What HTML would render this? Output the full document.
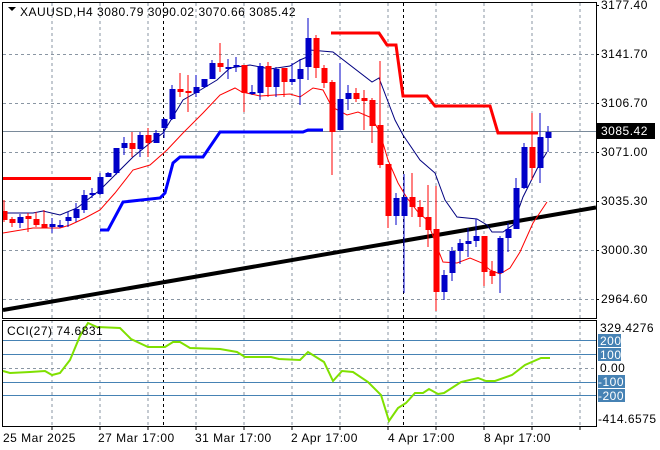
<!DOCTYPE html>
<html><head><meta charset="utf-8"><style>
body{margin:0;width:660px;height:450px;background:#fff;overflow:hidden}
svg{display:block}
text{font-family:"Liberation Sans",sans-serif;font-size:12px;letter-spacing:0.5px;fill:#000}
</style></head><body>
<svg width="660" height="450" xmlns="http://www.w3.org/2000/svg">
<defs><clipPath id="m"><rect x="3" y="3" width="593" height="315"/></clipPath></defs>
<rect width="660" height="450" fill="#fff"/>
<g stroke="#8a96a3" stroke-dasharray="3,3" stroke-width="1">
<path d="M52 3V318M100 3V318M148 3V318M196 3V318M244 3V318M292 3V318M340 3V318M388 3V318M436 3V318M484 3V318M532 3V318M580 3V318"/>
<path d="M3 54.5H596M3 103.5H596M3 152.5H596M3 201.5H596M3 250.5H596M3 299.5H596"/>
<path d="M52 320V426M100 320V426M148 320V426M196 320V426M244 320V426M292 320V426M340 320V426M388 320V426M436 320V426M484 320V426M532 320V426M580 320V426"/>
<path d="M3 368.5H596"/>
</g>
<g stroke="#000" stroke-dasharray="3,3"><path d="M163.5 3V318M403.5 3V318M163.5 320V426M403.5 320V426"/></g>
<path d="M3 131.5H596" stroke="#7a8a9a"/>
<g stroke="#4682b4"><path d="M3 340.5H596M3 354.5H596M3 382.5H596M3 395.5H596"/></g>
<g clip-path="url(#m)">
<path d="M3 310L596 207.5" stroke="#000" stroke-width="4"/>
<polyline fill="none" stroke="#f00" stroke-width="3" points="3,178.5 91,178.5"/>
<polyline fill="none" stroke="#f00" stroke-width="3" points="331,33 379,33 387,45 396,45 403,96 427,96 435,106 490,106 498,133 538,133"/>
<polyline fill="none" stroke="#0000ff" stroke-width="3" points="100,230 108,230 123,202 160,198 165,193 173,163 180,157 203,157 220,132 303,132 308,130 323,130"/>
<polyline fill="none" stroke="#000080" stroke-width="1" points="3,213 33,213 43,211 60,215 77,208 100,190 117,173 133,157 150,143 163,133 183,100 197,92 217,80 230,68 250,65 270,69 290,66 300,60 307,57 310,50 333,52 372,82 379,78 395,120 403,135 420,160 435,173 445,200 457,217 477,219 487,225 492,232 503,232 513,225 523,197 538,167 547,152"/>
<polyline fill="none" stroke="#f00" stroke-width="1" points="3,233 33,228 60,228 70,225 85,218 100,210 115,193 133,170 150,165 167,150 183,133 203,113 220,95 235,88 242,92 260,96 290,94 300,97 313,88 323,90 332,107 347,115 358,112 372,118 380,133 388,160 398,183 407,198 418,212 427,220 437,247 443,262 457,263 470,258 482,263 490,270 500,274 510,268 520,252 533,223 547,202"/>
<g id="c"></g>
</g>
<path d="M2.5 2.5H596.5V318.5H2.5ZM2.5 320.5H596.5V426.5H2.5Z" fill="none" stroke="#000"/>
<polyline fill="none" stroke="#7fe000" stroke-width="2" points="3,371 10,373 30,372 45,371 52,375 60,373 70,360 80,336 88,323 97,327 120,328 131,339 148,347 165,347 173,342 180,342 190,348 220,349 237,352 245,357 271,357 279,359 300,360 308,352 324,362 333,381 342,371 353,372 368,382 381,395 389,421 398,408 406,403 415,393 423,393 429,389 438,394 444,393 461,382 478,378 486,381 495,381 512,375 525,365 541,358 550,358"/>
<path d="M8 7l4 4 4-4z" fill="#000"/>
<text x="20" y="16">XAUUSD,H4  3080.79 3090.02 3070.66 3085.42</text>
<text x="7" y="335">CCI(27) 74.6831</text>
<g stroke="#000"><path d="M596 5.5h3M596 54.5h3M596 103.5h3M596 152.5h3M596 201.5h3M596 250.5h3M596 299.5h3M52 426v4M100 426v4M148 426v4M196 426v4M244 426v4M292 426v4M340 426v4M388 426v4M436 426v4M484 426v4M532 426v4M580 426v4"/></g>
<text x="601" y="9">3177.40</text>
<text x="601" y="58">3141.70</text>
<text x="601" y="107">3106.70</text>
<rect x="597" y="123" width="58" height="16" fill="#000"/>
<text x="601" y="135" style="fill:#fff">3085.42</text>
<text x="601" y="156">3071.00</text>
<text x="601" y="205">3035.30</text>
<text x="601" y="254">3000.30</text>
<text x="601" y="303">2964.60</text>
<text x="600" y="332">329.4276</text>
<g fill="#4682b4"><rect x="598" y="334" width="23" height="13"/><rect x="598" y="348" width="23" height="13"/><rect x="598" y="375" width="27" height="13"/><rect x="598" y="389" width="27" height="13"/></g>
<text x="600" y="345" style="fill:#fff">200</text><text x="600" y="359" style="fill:#fff">100</text><text x="598" y="386" style="fill:#fff">-100</text><text x="598" y="400" style="fill:#fff">-200</text>
<text x="600" y="372">0.00</text>
<text x="598" y="423">-414.6575</text>
<text x="3" y="442">25 Mar 2025</text>
<text x="98" y="442">27 Mar 17:00</text>
<text x="195" y="442">31 Mar 17:00</text>
<text x="291" y="442">2 Apr 17:00</text>
<text x="388" y="442">4 Apr 17:00</text>
<text x="484" y="442">8 Apr 17:00</text>
</svg>
<script>
var d=[["r",211,220,200,222],["r",219,223,217,227],["b",217,223,214,228],["r",216,219,213,232],["r",219,225,212,227],["r",224,228,210,228],["b",224,227,218,233],["b",225,226,220,228],["b",217,221,212,227],["b",209,218,203,222],["b",195,210,190,213],["b",193,195,188,198],["b",177,194,173,195],["b",173,177,172,177],["b",148,173,148,175],["b",143,148,137,155],["r",143,149,132,157],["b",135,149,132,157],["r",135,143,128,157],["b",133,143,130,143],["b",119,128,118,138],["b",89,119,85,120],["r",89,92,73,97],["r",91,93,75,112],["b",87,93,75,97],["b",79,87,79,88],["b",63,79,60,79],["r",63,67,43,72],["b",67,69,59,79],["b",65,67,57,72],["r",65,93,65,112],["b",92,94,85,95],["b",66,93,63,100],["r",66,87,62,97],["b",69,87,67,97],["r",68,82,68,97],["b",79,82,63,85],["b",69,79,59,105],["b",38,67,18,80],["r",38,68,35,78],["r",68,83,65,88],["r",82,132,80,175],["b",99,130,63,130],["b",93,99,85,110],["r",93,99,88,102],["r",98,101,90,130],["r",100,126,98,143],["r",125,165,61,168],["r",164,216,164,228],["b",198,216,193,225],["b",197,216,174,293],["r",197,207,173,217],["r",207,217,200,227],["r",217,230,185,247],["r",229,292,186,311],["b",275,292,270,300],["b",251,273,247,281],["b",243,251,239,264],["b",241,244,228,257],["b",236,241,219,247],["r",236,272,236,286],["r",271,276,261,284],["b",238,273,236,293],["b",229,238,223,252],["b",188,229,178,229],["b",147,188,143,189],["r",147,168,113,180],["b",137,168,113,183],["b",132,138,126,152]];
var s="";d.forEach(function(c,i){var x=4+8*i,col=c[0]=="r"?"#f00":"#0000c8";var h=Math.max(c[2]-c[1],2);s+='<rect x="'+(x-0.5)+'" y="'+c[3]+'" width="1" height="'+(c[4]-c[3])+'" fill="'+col+'"/><rect x="'+(x-2.5)+'" y="'+c[1]+'" width="6" height="'+h+'" fill="'+col+'"/>';});
document.getElementById("c").innerHTML=s;
</script>
</body></html>
